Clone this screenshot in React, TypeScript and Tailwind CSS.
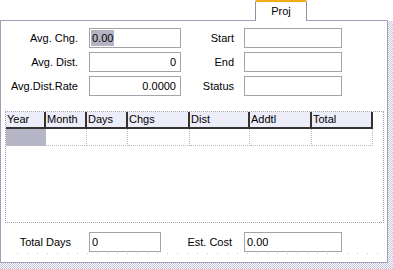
const dither =
  '[background-image:repeating-conic-gradient(#c4c4e0_0%_25%,#ffffff_0%_50%)] [background-size:2px_2px]';

function Field({ value, align = 'left', selected = false, w }: { value?: string; align?: 'left' | 'right'; selected?: boolean; w: string }) {
  return (
    <div
      className={`${w} h-[20px] border border-[#a4a4a8] bg-white flex items-center ${
        align === 'right' ? 'justify-end pr-[3px]' : 'pl-[1px]'
      }`}
    >
      {value && (
        <span className={`leading-[16px] px-[1px] ${selected ? 'bg-[#b4b4c4]' : ''}`}>{value}</span>
      )}
    </div>
  );
}

const columns = [
  { name: 'Year', w: 'w-[40px]' },
  { name: 'Month', w: 'w-[41px]' },
  { name: 'Days', w: 'w-[41px]' },
  { name: 'Chgs', w: 'w-[62px]' },
  { name: 'Dist', w: 'w-[60px]' },
  { name: 'Addtl', w: 'w-[62px]' },
  { name: 'Total', w: 'w-[61px]' },
];

export default function App() {
  return (
    <div className="w-[393px] h-[269px] bg-white text-black text-[11px] font-['Liberation_Sans',Arial,sans-serif] flex flex-col overflow-hidden">
      {/* tab strip */}
      <div className="flex h-[21px] shrink-0">
        <div className="w-[255px] border-b border-[#a0a0b8]" />
        <div className="w-[52px] border-t-2 border-t-[#f2aa18] border-x border-x-[#9090a8] rounded-t-[2px] flex items-center justify-center pb-[1px]">
          Proj
        </div>
        <div className="w-[81px] border-b border-[#a0a0b8]" />
      </div>

      <div className="flex">
        {/* panel */}
        <div className="w-[388px] h-[242px] border-l border-r border-b border-[#a0a0b8] flex flex-col">
          <div className="mt-[7px] flex flex-col gap-[4px]">
            {[
              { l: 'Avg. Chg.', v: '0.00', a: 'left' as const, sel: true, r: 'Start' },
              { l: 'Avg. Dist.', v: '0', a: 'right' as const, sel: false, r: 'End' },
              { l: 'Avg.Dist.Rate', v: '0.0000', a: 'right' as const, sel: false, r: 'Status' },
            ].map((row) => (
              <div key={row.l} className="flex items-center h-[20px]">
                <div className="w-[77px] text-right">{row.l}</div>
                <div className="ml-[11px]">
                  <Field w="w-[92px]" value={row.v} align={row.a} selected={row.sel} />
                </div>
                <div className="w-[53px] text-right">{row.r}</div>
                <div className="ml-[10px]">
                  <Field w="w-[98px]" />
                </div>
              </div>
            ))}
          </div>

          {/* grid */}
          <div className="mt-[15px] ml-[4px] w-[379px] h-[112px] border border-dotted border-[#a0a0b4] bg-white">
            <div className="flex h-[17px]">
              {columns.map((c) => (
                <div
                  key={c.name}
                  className={`${c.w} bg-[#ededf9] border-r-2 border-b-2 border-[#333] pl-[1px] leading-[15px] overflow-hidden whitespace-nowrap`}
                >
                  {c.name}
                </div>
              ))}
            </div>
            <div className="flex h-[17px]">
              {columns.map((c, i) => (
                <div
                  key={c.name}
                  className={`${c.w} border-r border-b border-dotted border-[#b8b8c8] ${i === 0 ? 'bg-[#b6b6c6]' : ''}`}
                />
              ))}
            </div>
          </div>

          {/* totals */}
          <div className="mt-[9px] flex items-center h-[20px]">
            <div className="w-[70px] text-right">Total Days</div>
            <div className="ml-[18px]">
              <Field w="w-[72px]" value="0" />
            </div>
            <div className="w-[71px] text-right">Est. Cost</div>
            <div className="ml-[12px]">
              <Field w="w-[98px]" value="0.00" />
            </div>
          </div>
          <div className="mt-[1px] ml-[16px] w-[366px] h-px [background-image:linear-gradient(to_right,#c8c8c8_1px,transparent_1px)] [background-size:10px_1px]" />
        </div>
        {/* right shadow */}
        <div className={`w-[5px] h-[242px] ${dither}`} />
      </div>
      <div className={`h-[6px] ${dither}`} />
    </div>
  );
}
